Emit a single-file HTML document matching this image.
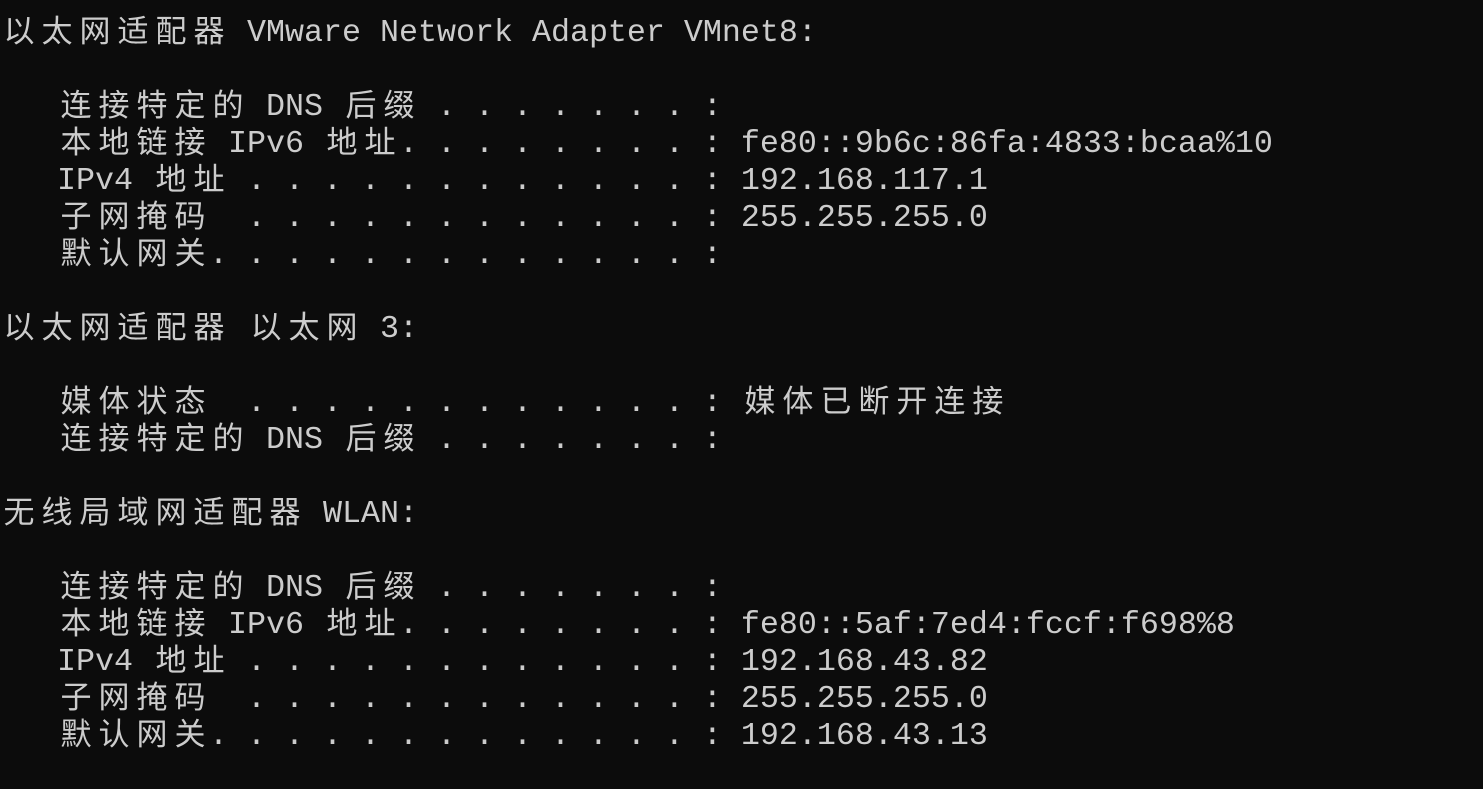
<!DOCTYPE html>
<html><head><meta charset="utf-8"><style>
html,body{margin:0;padding:0;background:#0c0c0c;width:1483px;height:789px;overflow:hidden}
.l{position:absolute;left:0;height:37px;line-height:37px;font-family:"Liberation Mono",monospace;font-size:31.67px;color:#cccccc;white-space:pre}
.c{font-family:"Noto Sans CJK SC","WenQuanYi Zen Hei",sans-serif;font-size:31px;letter-spacing:7px;margin-left:3.5px;margin-right:-3.5px;line-height:0;vertical-align:baseline;position:relative;top:1px}
</style></head><body>
<div class="l" style="top:15px"><span class="c">以太网适配器</span> VMware Network Adapter VMnet8:</div>
<div class="l" style="top:89px">   <span class="c">连接特定的</span> DNS <span class="c">后缀</span> . . . . . . . :</div>
<div class="l" style="top:126px">   <span class="c">本地链接</span> IPv6 <span class="c">地址</span>. . . . . . . . : fe80::9b6c:86fa:4833:bcaa%10</div>
<div class="l" style="top:163px">   IPv4 <span class="c">地址</span> . . . . . . . . . . . . : 192.168.117.1</div>
<div class="l" style="top:200px">   <span class="c">子网掩码</span>  . . . . . . . . . . . . : 255.255.255.0</div>
<div class="l" style="top:237px">   <span class="c">默认网关</span>. . . . . . . . . . . . . :</div>
<div class="l" style="top:311px"><span class="c">以太网适配器</span> <span class="c">以太网</span> 3:</div>
<div class="l" style="top:385px">   <span class="c">媒体状态</span>  . . . . . . . . . . . . : <span class="c">媒体已断开连接</span></div>
<div class="l" style="top:422px">   <span class="c">连接特定的</span> DNS <span class="c">后缀</span> . . . . . . . :</div>
<div class="l" style="top:496px"><span class="c">无线局域网适配器</span> WLAN:</div>
<div class="l" style="top:570px">   <span class="c">连接特定的</span> DNS <span class="c">后缀</span> . . . . . . . :</div>
<div class="l" style="top:607px">   <span class="c">本地链接</span> IPv6 <span class="c">地址</span>. . . . . . . . : fe80::5af:7ed4:fccf:f698%8</div>
<div class="l" style="top:644px">   IPv4 <span class="c">地址</span> . . . . . . . . . . . . : 192.168.43.82</div>
<div class="l" style="top:681px">   <span class="c">子网掩码</span>  . . . . . . . . . . . . : 255.255.255.0</div>
<div class="l" style="top:718px">   <span class="c">默认网关</span>. . . . . . . . . . . . . : 192.168.43.13</div>
</body></html>
